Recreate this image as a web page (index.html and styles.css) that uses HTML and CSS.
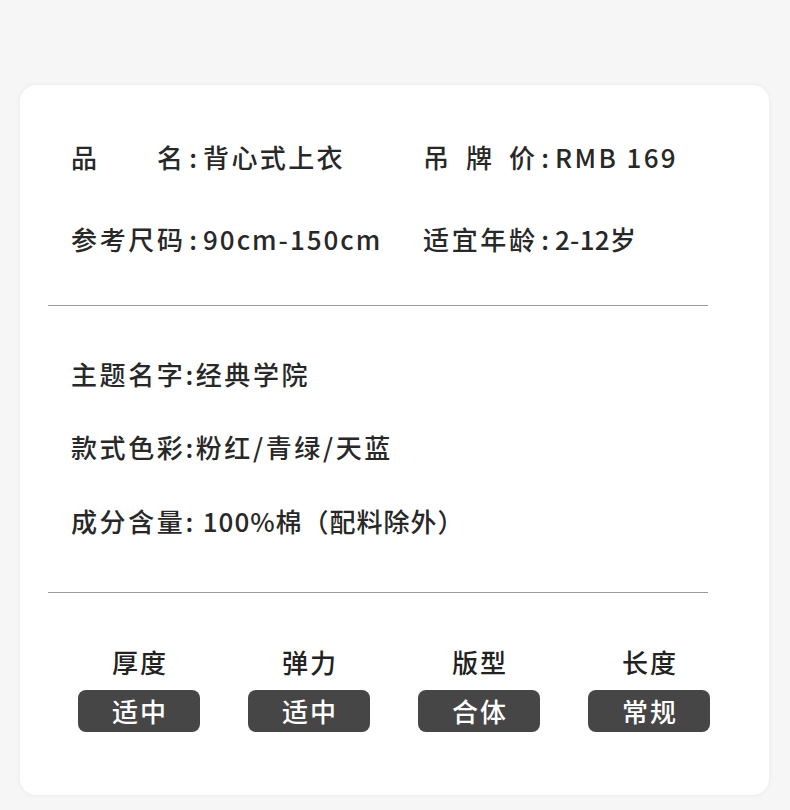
FILE: index.html
```html
<!DOCTYPE html>
<html lang="zh-CN">
<head>
<meta charset="utf-8">
<title>商品信息</title>
<link rel="stylesheet" href="styles.css">
</head>
<body>
<div class="card">
  <div class="sec sec-top">
    <div class="grid2">
      <div class="item"><span class="lbl">品名</span><span class="colon">:</span><span class="val">背心式上衣</span></div>
      <div class="item"><span class="lbl">吊牌价</span><span class="colon">:</span><span class="val">RMB 169</span></div>
      <div class="item"><span class="lbl">参考尺码</span><span class="colon">:</span><span class="val val-size">90cm-150cm</span></div>
      <div class="item"><span class="lbl">适宜年龄</span><span class="colon">:</span><span class="val val-tight">2-12岁</span></div>
    </div>
  </div>
  <hr class="divider">
  <div class="sec sec-mid">
    <div class="line">主题名字:经典学院</div>
    <div class="line">款式色彩:粉红/青绿/天蓝</div>
    <div class="line">成分含量:<span class="comp">100%棉（配料除外）</span></div>
  </div>
  <hr class="divider">
  <div class="attrs">
    <div class="attr"><div class="attr-name">厚度</div><div class="badge">适中</div></div>
    <div class="attr"><div class="attr-name">弹力</div><div class="badge">适中</div></div>
    <div class="attr"><div class="attr-name">版型</div><div class="badge">合体</div></div>
    <div class="attr"><div class="attr-name">长度</div><div class="badge">常规</div></div>
  </div>
</div>
</body>
</html>
```
FILE: styles.css
```css
html, body {
  margin: 0;
  padding: 0;
}
body {
  background: #f6f6f6;
  font-family: "Noto Sans CJK SC", "Noto Sans", sans-serif;
  color: #282828;
  width: 790px;
  height: 810px;
  overflow: hidden;
}
.card {
  margin: 85px 0 0 20px;
  width: 749px;
  height: 710px;
  box-sizing: border-box;
  background: #fff;
  border-radius: 16px;
  box-shadow: 0 0 5px rgba(0, 0, 0, 0.06);
  padding: 56px 61px 0 28px;
}
.sec {
  font-size: 26px;
  font-weight: 500;
  line-height: 32px;
  letter-spacing: 2.2px;
}
.sec-top {
  padding-left: 23px;
}
.grid2 {
  display: grid;
  grid-template-columns: 352px 1fr;
  row-gap: 49.5px;
}
.item {
  display: flex;
  align-items: center;
  white-space: nowrap;
}
.lbl {
  display: inline-block;
  width: 112px;
  text-align: justify;
  text-align-last: justify;
  letter-spacing: 0;
}
.colon {
  display: inline-block;
  width: 20px;
  text-align: center;
  letter-spacing: 0;
}
.val {
  letter-spacing: 2.4px;
}
.val-size {
  letter-spacing: 2px;
}
.val-tight {
  letter-spacing: 0.3px;
}
.divider {
  border: 0;
  height: 1px;
  background: #9a9a9a;
  margin: 50px 0 0 0;
}
.sec-mid {
  padding: 52px 0 0 23px;
  display: flex;
  flex-direction: column;
  gap: 41.5px;
  letter-spacing: 2.6px;
}
.line {
  white-space: nowrap;
}
.comp {
  letter-spacing: 1px;
  margin-left: 7px;
}
.sec-mid + .divider {
  margin-top: 55px;
}
.attrs {
  display: grid;
  grid-template-columns: repeat(4, 122px);
  column-gap: 48px;
  padding: 53px 0 0 30px;
}
.attr {
  display: flex;
  flex-direction: column;
  align-items: center;
}
.attr-name {
  font-size: 26px;
  font-weight: 500;
  line-height: 32px;
  letter-spacing: 2px;
  padding-left: 2px;
  color: #222;
}
.badge {
  margin-top: 12.5px;
  width: 122px;
  height: 42px;
  border-radius: 8px;
  background: #464646;
  color: #fff;
  font-size: 26px;
  font-weight: 500;
  line-height: 42px;
  letter-spacing: 2px;
  text-indent: 2px;
  text-align: center;
}
```
